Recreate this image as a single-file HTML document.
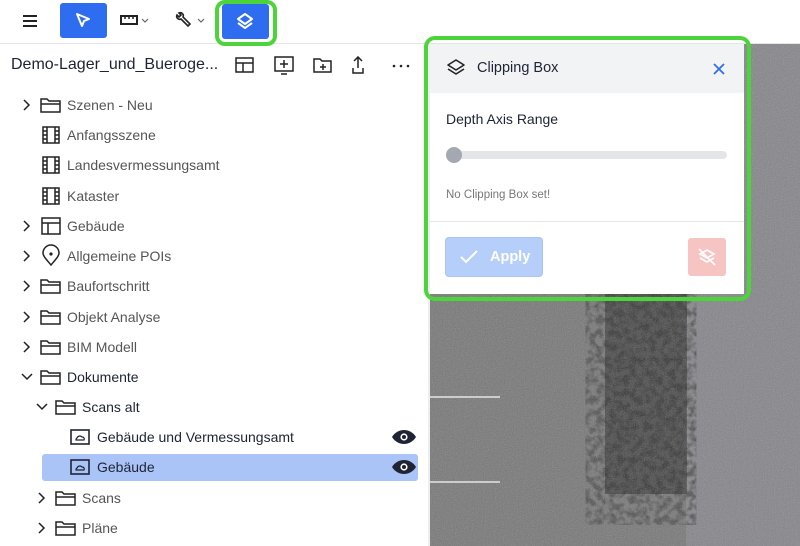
<!DOCTYPE html>
<html><head><meta charset="utf-8"><style>
*{box-sizing:border-box;margin:0;padding:0}
body{width:800px;height:546px;overflow:hidden;background:#fff;font-family:"Liberation Sans",sans-serif;position:relative}
.abs{position:absolute}
.row{position:absolute;left:0;height:26px;font-size:14px;color:#555;display:flex;align-items:center}
.row span{position:absolute;white-space:nowrap}
.b{color:#1e2433}
svg{position:absolute}
</style></head><body>
<!-- toolbar -->
<div class="abs" style="left:0;top:43px;width:800px;height:1px;background:#e3e5e8"></div>
<svg style="left:22px;top:14px" width="16" height="14" viewBox="0 0 16 14"><path d="M1 2h14M1 7h14M1 12h14" stroke="#222" stroke-width="2"/></svg>
<div class="abs" style="left:60px;top:3px;width:47px;height:35px;background:#2f6df0;border-radius:3px"></div>
<svg style="left:74px;top:11px" width="18" height="18" viewBox="0 0 18 18"><path d="M3 3l12 5-5 2-2 5z" fill="none" stroke="#fff" stroke-width="2" stroke-linejoin="round"/></svg>
<svg style="left:120px;top:14px" width="32" height="14" viewBox="0 0 32 14"><rect x="1" y="2" width="16" height="8" fill="none" stroke="#222" stroke-width="2"/><path d="M5 2v3M9 2v3M13 2v3" stroke="#222" stroke-width="1.5"/><path d="M22 5l3 3 3-3" fill="none" stroke="#666" stroke-width="1.2"/></svg>
<svg style="left:174px;top:11px" width="32" height="18" viewBox="0 0 32 18"><path d="M3 4a3 3 0 0 0 4 4l7 7 2-2-7-7a3 3 0 0 0-4-4l2 2-2 2z" fill="none" stroke="#222" stroke-width="1.6"/><path d="M24 8l3 3 3-3" fill="none" stroke="#666" stroke-width="1.2"/></svg>
<div class="abs" style="left:215px;top:0;width:62px;height:46px;border:4px solid #4cd43a;border-radius:10px"></div>
<div class="abs" style="left:222px;top:4px;width:47px;height:35px;background:#2f6df0;border-radius:3px"></div>
<svg style="left:235px;top:12px" width="20" height="18" viewBox="0 0 20 18"><path d="M10 2l7 5-7 5-7-5z" fill="none" stroke="#fff" stroke-width="2" stroke-linejoin="round"/><path d="M3 11l7 5 7-5" fill="none" stroke="#fff" stroke-width="2" stroke-linejoin="round"/></svg>
<!-- sidebar -->
<div class="abs" style="left:428px;top:44px;width:2px;height:502px;background:#eceef0"></div>
<div class="abs" style="left:11px;top:56px;font-size:16px;color:#1e2433">Demo-Lager_und_Bueroge...</div>
<svg style="left:235px;top:56px" width="180" height="20" viewBox="0 0 180 20"><g fill="none" stroke="#222" stroke-width="1.5"><rect x="1" y="2" width="17" height="14"/><path d="M1 7h17M8 7v9"/><rect x="40" y="1" width="18" height="14"/><path d="M49 4v8M45 8h8M46 18h6"/><path d="M79 3h6l2 2h9v11h-17z"/><path d="M88 8v6M85 11h6"/><path d="M127 5l-4-4-4 4M123 1v11M118 12v5h10v-5"/></g><g fill="#222"><circle cx="159" cy="10" r="1.3"/><circle cx="166" cy="10" r="1.3"/><circle cx="173" cy="10" r="1.3"/></g></svg>

<svg style="left:0;top:90px" width="428" height="456" viewBox="0 90 428 456">
<defs>
<g id="fo"><path d="M0 3h6l2 2h11v11h-19z M0 8h19" fill="none" stroke="#222" stroke-width="1.5"/></g>
<g id="ch"><path d="M0 0l5 5-5 5" fill="none" stroke="#222" stroke-width="1.5"/></g>
<g id="cd"><path d="M0 0l5 5 5-5" fill="none" stroke="#222" stroke-width="1.5"/></g>
<g id="film"><path d="M1 1h16v16h-16zM5 1v16M13 1v16M1 5h4M1 9h4M1 13h4M13 5h4M13 9h4M13 13h4" fill="none" stroke="#222" stroke-width="1.5"/></g>
<g id="scan"><rect x="1" y="1" width="18" height="14" fill="none" stroke="#1e2433" stroke-width="1.6"/><path d="M6 11h8a2 2 0 0 0-2-3 3 3 0 0 0-5 1 2 2 0 0 0-1 2z" fill="none" stroke="#1e2433" stroke-width="1.2"/></g>
<g id="eye"><path d="M0 7c3-5 8-7 12-7s9 2 12 7c-3 5-8 7-12 7s-9-2-12-7z" fill="#1e2433"/><circle cx="12" cy="7" r="3.6" fill="#fff"/><circle cx="12" cy="7" r="2" fill="#1e2433"/></g>
</defs>
<rect x="42" y="454" width="376" height="27" rx="3" fill="#aac4f7"/>
<use href="#ch" x="24" y="100"/><use href="#fo" x="41" y="96"/>
<use href="#film" x="42" y="126"/><use href="#film" x="42" y="156"/><use href="#film" x="42" y="187"/>
<use href="#ch" x="24" y="221"/><path d="M42 218h18v16h-18zM42 223h18M48 223v11" fill="none" stroke="#222" stroke-width="1.5"/>
<use href="#ch" x="24" y="251"/><path d="M51 265c-5-6-8-9-8-12a8 8 0 0 1 16 0c0 3-3 6-8 12z" fill="none" stroke="#222" stroke-width="1.5"/><circle cx="51" cy="254" r="1.6" fill="#222"/>
<use href="#ch" x="24" y="281"/><use href="#fo" x="41" y="277"/>
<use href="#ch" x="24" y="312"/><use href="#fo" x="41" y="308"/>
<use href="#ch" x="24" y="342"/><use href="#fo" x="41" y="338"/>
<use href="#cd" x="22" y="374"/><use href="#fo" x="41" y="368"/>
<use href="#cd" x="37" y="404"/><use href="#fo" x="56" y="398"/>
<use href="#scan" x="70" y="429"/><use href="#eye" x="392" y="430"/>
<use href="#scan" x="70" y="459"/><use href="#eye" x="392" y="460"/>
<use href="#ch" x="39" y="493"/><use href="#fo" x="56" y="489"/>
<use href="#ch" x="39" y="523"/><use href="#fo" x="56" y="519"/>
</svg>
<div class="row" style="top:92px"><span style="left:67px">Szenen - Neu</span></div>
<div class="row" style="top:122px"><span style="left:67px">Anfangsszene</span></div>
<div class="row" style="top:152px"><span style="left:67px">Landesvermessungsamt</span></div>
<div class="row" style="top:183px"><span style="left:67px">Kataster</span></div>
<div class="row" style="top:213px"><span style="left:67px">Gebäude</span></div>
<div class="row" style="top:243px"><span style="left:67px">Allgemeine POIs</span></div>
<div class="row" style="top:273px"><span style="left:67px">Baufortschritt</span></div>
<div class="row" style="top:304px"><span style="left:67px">Objekt Analyse</span></div>
<div class="row" style="top:334px"><span style="left:67px">BIM Modell</span></div>
<div class="row b" style="top:364px"><span style="left:67px">Dokumente</span></div>
<div class="row b" style="top:394px"><span style="left:82px">Scans alt</span></div>
<div class="row b" style="top:424px"><span style="left:97px">Gebäude und Vermessungsamt</span></div>
<div class="row b" style="top:454px"><span style="left:97px">Gebäude</span></div>
<div class="row" style="top:485px"><span style="left:82px">Scans</span></div>
<div class="row" style="top:515px"><span style="left:82px">Pläne</span></div>

<!-- viewer -->
<svg style="left:430px;top:44px" width="370" height="502" viewBox="0 0 370 502">
<filter id="n"><feTurbulence type="fractalNoise" baseFrequency="0.9" numOctaves="1" seed="3"/><feColorMatrix type="saturate" values="0"/><feComponentTransfer><feFuncA type="table" tableValues="0 0.35"/></feComponentTransfer></filter>
<filter id="blob"><feTurbulence type="fractalNoise" baseFrequency="0.15" numOctaves="2" seed="7"/><feColorMatrix type="matrix" values="0 0 0 0 0.08  0 0 0 0 0.08  0 0 0 0 0.08  -3 0 0 0 1.9"/></filter>
<rect width="370" height="502" fill="#767676"/>
<rect x="256" width="114" height="502" fill="#848389"/>
<rect x="165" y="250" width="92" height="210" filter="url(#blob)"/>
<rect x="175" y="250" width="82" height="200" fill="#141414" opacity=".45"/>
<rect width="370" height="502" filter="url(#n)"/>
<rect x="0" y="352" width="70" height="2" fill="#ccc"/>
<rect x="0" y="437" width="70" height="2" fill="#ccc"/>
</svg>

<!-- panel -->
<div class="abs" style="left:424px;top:36px;width:327px;height:265px;border:4px solid #4cd43a;border-radius:11px"></div>
<div class="abs" style="left:430px;top:44px;width:314px;height:250px;background:#fff"></div>
<div class="abs" style="left:430px;top:44px;width:314px;height:49px;background:#f2f3f5"></div>
<svg style="left:446px;top:58px" width="20" height="20" viewBox="0 0 20 20"><path d="M10 2l8 5-8 5-8-5z" fill="none" stroke="#222" stroke-width="1.6" stroke-linejoin="round"/><path d="M2 11l8 5 8-5" fill="none" stroke="#222" stroke-width="1.6" stroke-linejoin="round"/></svg>
<div class="abs" style="left:477px;top:60px;font-size:14.5px;color:#1e2433">Clipping Box</div>
<svg style="left:712px;top:62px" width="14" height="14" viewBox="0 0 14 14"><path d="M2 2l10 10M12 2l-10 10" stroke="#2f6df0" stroke-width="1.8"/></svg>
<div class="abs" style="left:446px;top:111px;font-size:14px;color:#1e2433">Depth Axis Range</div>
<div class="abs" style="left:446px;top:151px;width:281px;height:8px;background:#e3e5e8;border-radius:4px"></div>
<div class="abs" style="left:446px;top:147px;width:16px;height:16px;background:#a4a8b0;border-radius:50%"></div>
<div class="abs" style="left:446px;top:189px;font-size:11.5px;color:#777">No Clipping Box set!</div>
<div class="abs" style="left:430px;top:221px;width:314px;height:1px;background:#e3e5e8"></div>
<div class="abs" style="left:445px;top:237px;width:98px;height:40px;background:#b6cefa;border:1px solid #a9c3f5;border-radius:4px"></div>
<svg style="left:459px;top:249px" width="20" height="16" viewBox="0 0 20 16"><path d="M2 8l5 5 11-11" fill="none" stroke="#fff" stroke-width="2"/></svg>
<div class="abs" style="left:490px;top:249px;font-size:14.5px;color:#fff;font-weight:bold">Apply</div>
<div class="abs" style="left:688px;top:238px;width:38px;height:38px;background:#f7c4c4;border-radius:3px"></div>
<svg style="left:697px;top:247px" width="20" height="20" viewBox="0 0 20 20"><path d="M10 3l7 4-7 4-7-4zM3 11l7 4 7-4M2 2l16 16" fill="none" stroke="#fff" stroke-width="1.6"/></svg>
</body></html>
